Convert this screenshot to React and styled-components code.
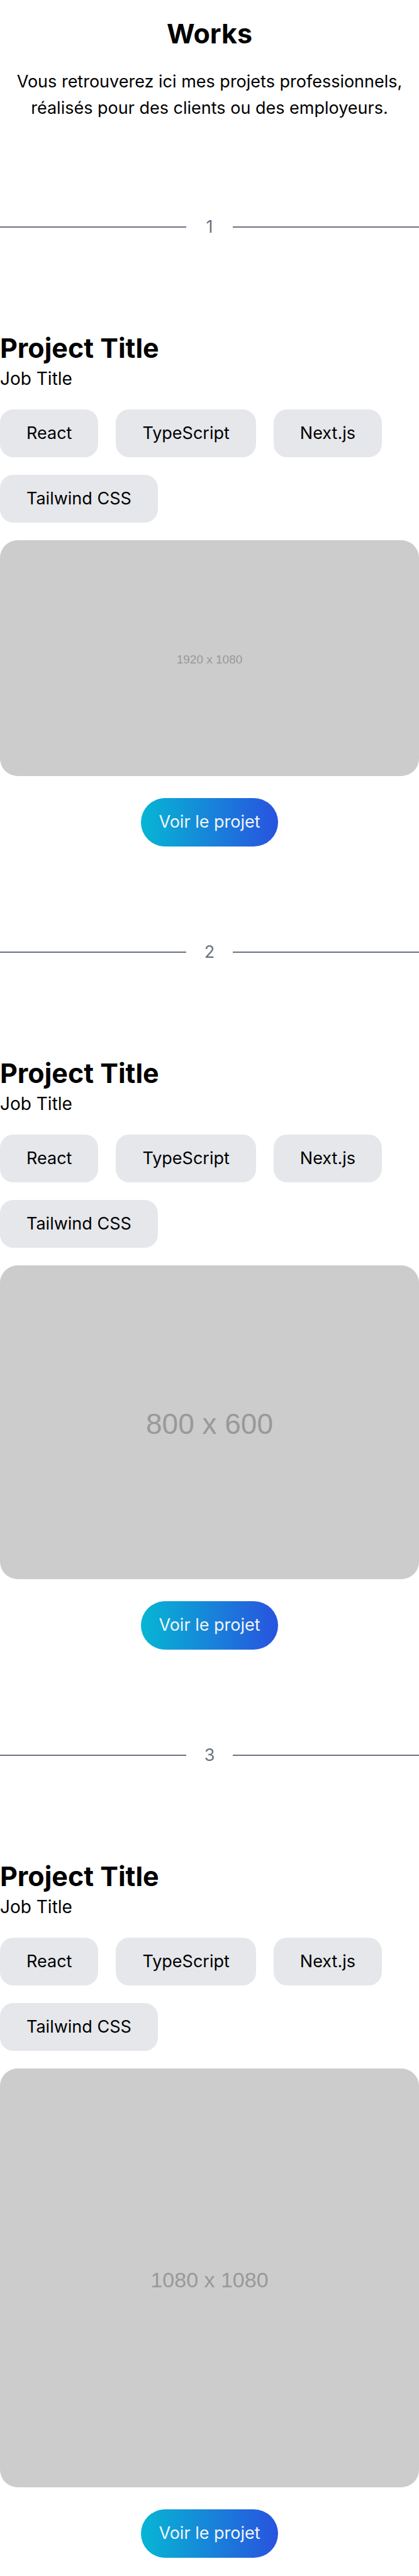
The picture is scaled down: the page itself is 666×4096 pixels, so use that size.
import React from "react";
import styled, { createGlobalStyle } from "styled-components";

const GlobalStyle = createGlobalStyle`
  *, *::before, *::after { box-sizing: border-box; }
  body {
    margin: 0;
    background: #fff;
    color: #000;
    font-family: Inter, "Liberation Sans", sans-serif;
    font-size: 27px;
    line-height: 42px;
  }
  h1, h2, p, ul, figure { margin: 0; padding: 0; }
`;

const Page = styled.main`
  padding: 25px 0 26px;
`;

const Header = styled.header`
  display: flex;
  flex-direction: column;
  gap: 28px;
  padding: 0 14px;
  text-align: center;
`;

const PageTitle = styled.h1`
  font-size: 43px;
  font-weight: 700;
  line-height: 56px;
`;

const Divider = styled.div`
  display: flex;
  align-items: center;
  gap: 28px;
  margin: 147px 0 143px;
  color: #6b7280;

  &::before, &::after {
    content: "";
    flex: 1;
    height: 2px;
    background: currentColor;
  }
`;

const DividerNumber = styled.span`
  width: 18px;
  display: flex;
  justify-content: center;
`;

const ProjectTitle = styled.h2`
  font-size: 43px;
  font-weight: 700;
  line-height: 56px;
`;

const JobTitle = styled.p`
  font-size: 28px;
`;

const TagList = styled.ul`
  display: flex;
  flex-wrap: wrap;
  gap: 28px;
  margin: 28px 0;
  list-style: none;
`;

const Tag = styled.li`
  padding: 17px 42px;
  border-radius: 21px;
  background: #e5e7eb;
`;

const Placeholder = styled.figure`
  display: flex;
  align-items: center;
  justify-content: center;
  width: 100%;
  aspect-ratio: ${(p) => p.$ratio};
  padding-top: 6px;
  border-radius: 28px;
  background: #ccc;
  color: #999;
  font-family: "Liberation Sans", sans-serif;
  font-size: ${(p) => p.$textSize}px;
`;

const Actions = styled.div`
  display: flex;
  justify-content: center;
  margin-top: 35px;
`;

const ProjectLink = styled.a`
  padding: 17px 28px 18px;
  border-radius: 39px;
  background: linear-gradient(to right, #06b6d4, #2853df);
  color: #f3f4f6;
  text-decoration: none;
`;

const tags = ["React", "TypeScript", "Next.js", "Tailwind CSS"];

const projects = [
  { ratio: "1920 / 1080", label: "1920 x 1080", textSize: 19 },
  { ratio: "800 / 600", label: "800 x 600", textSize: 46 },
  { ratio: "1080 / 1080", label: "1080 x 1080", textSize: 34 },
];

function Project({ number, ratio, label, textSize }) {
  return (
    <section>
      <Divider>
        <DividerNumber>{number}</DividerNumber>
      </Divider>
      <ProjectTitle>Project Title</ProjectTitle>
      <JobTitle>Job Title</JobTitle>
      <TagList>
        {tags.map((tag) => (
          <Tag key={tag}>{tag}</Tag>
        ))}
      </TagList>
      <Placeholder $ratio={ratio} $textSize={textSize}>
        {label}
      </Placeholder>
      <Actions>
        <ProjectLink href="#">Voir le projet</ProjectLink>
      </Actions>
    </section>
  );
}

export default function App() {
  return (
    <>
      <GlobalStyle />
      <Page>
        <Header>
          <PageTitle>Works</PageTitle>
          <p>
            Vous retrouverez ici mes projets professionnels, réalisés pour des
            clients ou des employeurs.
          </p>
        </Header>
        {projects.map((project, index) => (
          <Project key={project.label} number={index + 1} {...project} />
        ))}
      </Page>
    </>
  );
}
